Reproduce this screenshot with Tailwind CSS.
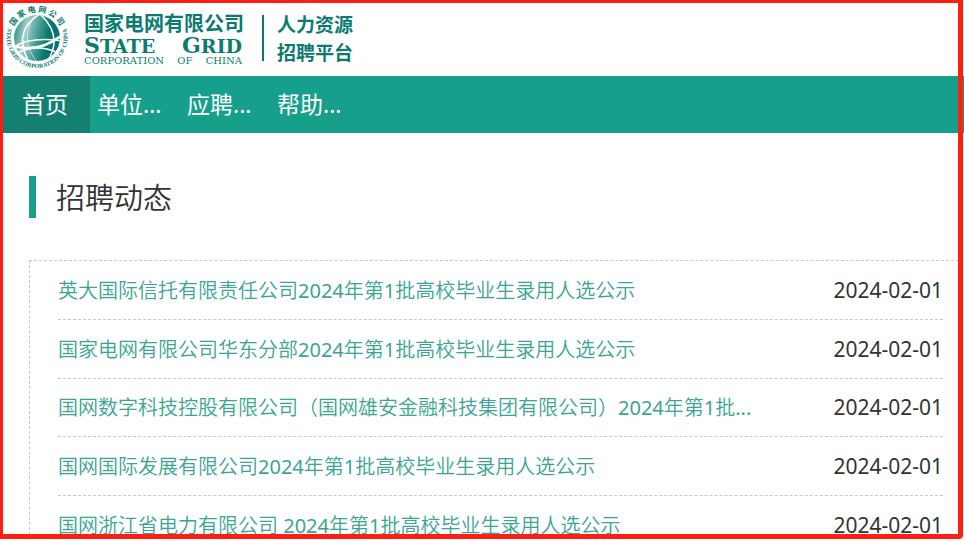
<!DOCTYPE html>
<html lang="zh-CN">
<head>
<meta charset="utf-8">
<meta name="viewport" content="width=device-width, initial-scale=1">
<title>国家电网有限公司 人力资源招聘平台</title>
<script src="https://cdn.jsdelivr.net/npm/@tailwindcss/browser@4"></script>
</head>
<body class="bg-white text-[#333] font-['Noto_Sans','Noto_Sans_CJK_SC',sans-serif]">
<div class="h-screen overflow-hidden">
  <header class="flex h-[76px] items-center pl-1 text-[#0b7b70]">
    <svg class="size-[68px] shrink-0" viewBox="0 0 68 68" role="img" aria-label="国家电网">
      <defs>
        <linearGradient id="globe" x1="0" y1="0.3" x2="1" y2="0.5">
          <stop offset="0" stop-color="#2d9086"/>
          <stop offset="0.25" stop-color="#a4d0cb"/>
          <stop offset="0.55" stop-color="#3a988e"/>
          <stop offset="0.75" stop-color="#04766b"/>
          <stop offset="1" stop-color="#04766b"/>
        </linearGradient>
        <clipPath id="disc"><circle cx="33" cy="34" r="23"/></clipPath>
        <path id="arcTop" d="M8 27A26 26 0 0 1 58 27"/>
        <path id="arcBottom" d="M4 24A30.500 30.500 0 1 0 62 24"/>
      </defs>
      <circle cx="33" cy="34" r="23" fill="url(#globe)"/>
      <g clip-path="url(#disc)" fill="none" stroke="#fff">
        <path d="M36 10Q8 27 25 58" stroke-width="1.500"/>
        <path d="M32 10Q14 34 33 58" stroke-width="1" opacity="0.6"/>
        <path d="M36 10Q60 32 43 58" stroke-width="1.500"/>
        <path d="M9 42Q36 49 58 31" stroke-width="2.500"/>
        <path d="M8 44Q26 32 58 37" stroke-width="1.500"/>
        <path d="M15 48Q34 40 52 48" stroke-width="1.500"/>
      </g>
      <g fill="#0b7b70" font-weight="700">
        <text font-family="Noto Sans CJK SC, sans-serif" font-size="8"><textPath href="#arcTop" startOffset="50%" text-anchor="middle">国 家 电 网 公 司</textPath></text>
        <text font-family="Liberation Serif, serif" font-size="6"><textPath href="#arcBottom" startOffset="50%" text-anchor="middle">STATE GRID CORPORATION OF CHINA</textPath></text>
      </g>
    </svg>
    <div class="ml-3 flex w-[158px] flex-col whitespace-nowrap">
      <span class="font-['Noto_Sans_CJK_SC',sans-serif] text-[20px] font-bold leading-[22px]">国家电网有限公司</span>
      <span class="flex items-baseline justify-between font-['DejaVu_Serif',serif] text-[22px] font-bold leading-[22px]"><span>S<span class="text-[19px]">TATE</span></span> <span>G<span class="text-[19px]">RID</span></span></span>
      <span class="flex justify-between font-['DejaVu_Serif',serif] text-[10px] leading-[8px]"><span>CORPORATION</span> <span>OF</span> <span>CHINA</span></span>
    </div>
    <div class="ml-5 flex h-[46px] flex-col justify-center whitespace-nowrap border-l-2 border-[#0b7b70] pl-[13px] font-['Noto_Sans_CJK_SC',sans-serif] text-[19px] font-bold leading-[28px]">
      <span>人力资源</span>
      <span>招聘平台</span>
    </div>
  </header>

  <nav class="flex h-[57px] bg-[#169f8b] text-[23px] leading-[57px] text-white">
    <a href="#" class="w-[90px] bg-[#138072] text-center">首页</a>
    <a href="#" class="w-[90px] pl-[7px]">单位...</a>
    <a href="#" class="w-[90px] pl-[7px]">应聘...</a>
    <a href="#" class="w-[90px] pl-[7px]">帮助...</a>
  </nav>

  <main class="pl-[29px] pt-[43px]">
    <h1 class="mb-[42px] h-[42px] border-l-[7px] border-[#169f8b] pl-5 text-[29px] font-[350] leading-[44px]">招聘动态</h1>
    <ul class="border-t border-l border-dashed border-[#c8c8c8] pl-7 pr-[21px] font-['Noto_Sans','Noto_Sans_CJK_SC_DemiLight','Noto_Sans_CJK_SC',sans-serif] text-[20px]">
      <li class="flex h-[59px] items-center justify-between border-b border-dashed border-[#c8c8c8] pt-px"><a href="#" class="text-[#3aa591]">英大国际信托有限责任公司2024年第1批高校毕业生录用人选公示</a><time class="text-[21px]">2024-02-01</time></li>
      <li class="flex h-[59px] items-center justify-between border-b border-dashed border-[#c8c8c8] pt-px"><a href="#" class="text-[#3aa591]">国家电网有限公司华东分部2024年第1批高校毕业生录用人选公示</a><time class="text-[21px]">2024-02-01</time></li>
      <li class="flex h-[58px] items-center justify-between border-b border-dashed border-[#c8c8c8] pt-px"><a href="#" class="text-[#3aa591]">国网数字科技控股有限公司（国网雄安金融科技集团有限公司）2024年第1批...</a><time class="text-[21px]">2024-02-01</time></li>
      <li class="flex h-[59px] items-center justify-between border-b border-dashed border-[#c8c8c8] pt-px"><a href="#" class="text-[#3aa591]">国网国际发展有限公司2024年第1批高校毕业生录用人选公示</a><time class="text-[21px]">2024-02-01</time></li>
      <li class="flex h-[59px] items-center justify-between border-b border-dashed border-[#c8c8c8] pt-px"><a href="#" class="text-[#3aa591]">国网浙江省电力有限公司 2024年第1批高校毕业生录用人选公示</a><time class="text-[21px]">2024-02-01</time></li>
    </ul>
  </main>
</div>
<div class="pointer-events-none fixed top-0 left-0 right-px bottom-[2px] rounded-br-[4px] border-t-[3px] border-l-[3px] border-r-[5px] border-b-[5px] border-[#ff1f12]"></div>
</body>
</html>
